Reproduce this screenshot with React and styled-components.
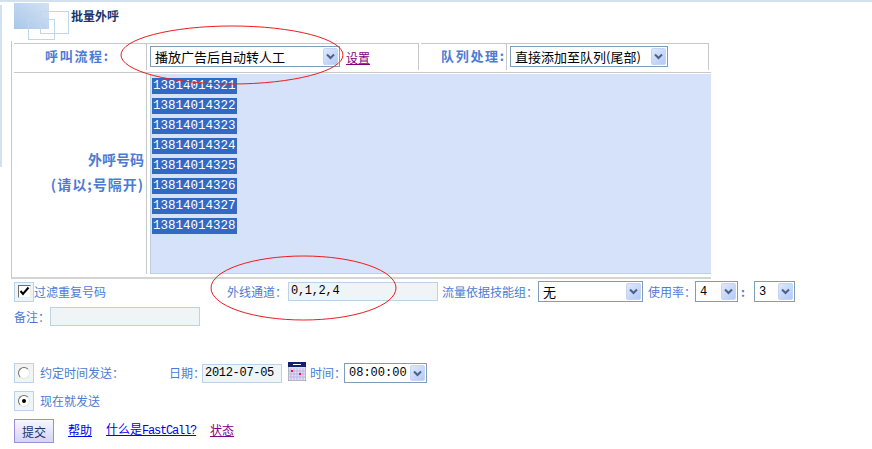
import React from "react";
import styled, { createGlobalStyle } from "styled-components";

const Global = createGlobalStyle`
  html, body { margin: 0; padding: 0; background: #fff; }
  body { font-family: "Noto Sans CJK SC", "Liberation Sans", sans-serif; font-size: 12px; }
`;
const CJK = `"Noto Sans CJK SC", "Liberation Sans", sans-serif`;
const MONO = `"Liberation Mono", "Noto Sans CJK SC", monospace`;
const LABEL = "#4d7bd3";
const RULE = "#c8c8c8";

const Page = styled.div`
  position: relative;
  width: 872px;
  height: 449px;
  box-sizing: border-box;
  border-top: 2px solid #d3e1ee;
  overflow: hidden;
  font-family: ${CJK};
`;
const EdgeLine = styled.div`
  position: absolute;
  left: 0;
  top: 3px;
  width: 2px;
  height: 162px;
  background: #d3e1ee;
`;
const Header = styled.header`
  height: 39px;
  display: flex;
  padding-left: 14px;
  box-sizing: border-box;
`;
const Logo = styled.svg`
  width: 56px;
  height: 38px;
  margin-top: 1px;
  flex: none;
`;
const Title = styled.h1`
  margin: 6px 0 0 1px;
  font-size: 12px;
  line-height: 16px;
  font-weight: 700;
  color: #16336e;
`;
const Table = styled.section`
  margin-left: 11px;
  width: 700px;
  height: 238px;
  box-sizing: border-box;
  border-left: 1px solid ${RULE};
  border-bottom: 2px solid #d4d4d4;
  padding-top: 2px;
`;
const TopRow = styled.div`
  height: 29px;
  padding-left: 2px;
  display: flex;
`;
const Cell = styled.div`
  box-sizing: border-box;
  height: 27px;
  width: ${(p) => p.$w}px;
  flex: none;
  display: flex;
  align-items: flex-start;
  padding: 2px 0 0 ${(p) => p.$pl || 0}px;
  border-top: 1px solid ${RULE};
  border-right: 1px solid ${RULE};
`;
const Gap = styled.div`
  width: 2px;
  flex: none;
`;
const RowLabel = styled.span`
  font-size: 13px;
  line-height: 20px;
  font-weight: 700;
  letter-spacing: 1.7px;
  color: ${LABEL};
  white-space: nowrap;
`;
const BodyRow = styled.div`
  display: flex;
  border-top: 1px solid ${RULE};
  margin-left: 2px;
  width: 697px;
`;
const SideCell = styled.div`
  width: 133px;
  height: 201px;
  box-sizing: border-box;
  border-right: 1px solid ${RULE};
  flex: none;
  display: flex;
  flex-direction: column;
  align-items: flex-end;
  padding: 78px 2px 0 0;
  gap: 9px;
`;
const SideText = styled.span`
  font-size: 14px;
  line-height: 16px;
  font-weight: 700;
  color: ${LABEL};
  letter-spacing: ${(p) => p.$ls || 0}px;
  white-space: nowrap;
`;
const Numbers = styled.div`
  margin: 1px 0 0 3px;
  width: 561px;
  height: 200px;
  box-sizing: border-box;
  background: #d5e2f9;
  border-left: 1px solid #bcd0e4;
  border-bottom: 1px solid #bcd0e4;
  padding: 4px 0 0 1px;
  display: flex;
  flex-direction: column;
  gap: 4px;
`;
const NumberLine = styled.div`
  width: 85px;
  height: 16px;
  line-height: 16px;
  background: #316ac5;
  color: #fff;
  font-family: ${MONO};
  font-size: 12.5px;
  padding-left: 1px;
  box-sizing: border-box;
`;
const SelectBox = styled.div`
  box-sizing: border-box;
  width: ${(p) => p.$w}px;
  height: ${(p) => p.$h || 20}px;
  flex: none;
  border: 1px solid #7f9db9;
  background: #fff;
  display: flex;
  align-items: center;
  padding: 1px 1px 1px 4px;
  margin-left: ${(p) => p.$ml || 0}px;
  color: #000;
`;
const SelectValue = styled.span`
  flex: 1;
  white-space: nowrap;
  font-family: ${(p) => (p.$mono ? MONO : CJK)};
  font-size: ${(p) => (p.$mono ? 12 : 13)}px;
  line-height: 16px;
`;
const ArrowBtn = styled.span`
  width: 15px;
  height: 100%;
  flex: none;
  border-radius: 2px;
  background: linear-gradient(135deg, #dfe9fd, #b2c9f8);
  border: 1px solid #c4d5f6;
  box-sizing: border-box;
  display: flex;
  align-items: center;
  justify-content: center;
`;
const Select = ({ w, h, ml, mono, children }) => (
  <SelectBox $w={w} $h={h} $ml={ml}>
    <SelectValue $mono={mono}>{children}</SelectValue>
    <ArrowBtn>
      <svg width="9" height="7" viewBox="0 0 9 7">
        <path d="M1 1.5 L4.5 5 L8 1.5" fill="none" stroke="#4d6185" strokeWidth="2" />
      </svg>
    </ArrowBtn>
  </SelectBox>
);
const Link = styled.a`
  font-size: 12px;
  line-height: 14px;
  color: ${(p) => (p.$visited ? "#800080" : "#0000ee")};
  text-decoration: underline;
  margin-left: ${(p) => p.$ml || 0}px;
  margin-top: ${(p) => p.$mt || 0}px;
  margin-bottom: ${(p) => p.$mb || 0}px;
  white-space: nowrap;
`;
const Latin = styled.span`
  font-family: ${MONO};
  font-size: 12px;
  letter-spacing: -1.2px;
`;
const FormRow = styled.div`
  display: flex;
  align-items: center;
  height: ${(p) => p.$h}px;
  margin-top: ${(p) => p.$mt || 0}px;
  padding-left: 14px;
`;
const Label = styled.span`
  font-size: 12px;
  line-height: 16px;
  color: ${LABEL};
  white-space: nowrap;
  margin-left: ${(p) => p.$ml || 0}px;
  width: ${(p) => (p.$w ? `${p.$w}px` : "auto")};
  flex: none;
`;
const TextInput = styled.div`
  box-sizing: border-box;
  width: ${(p) => p.$w}px;
  height: 19px;
  flex: none;
  background: #eff4f7;
  border: 1px solid #bcd2e6;
  margin-left: ${(p) => p.$ml || 0}px;
  padding-left: 2px;
  font-family: ${MONO};
  font-size: 12px;
  letter-spacing: -0.3px;
  line-height: 17px;
  color: #000;
`;
const MarkFrame = styled.span`
  box-sizing: border-box;
  width: 20px;
  height: 20px;
  flex: none;
  border: 1px solid #bcd2e6;
  background: #eff4f7;
  display: flex;
  align-items: center;
  justify-content: center;
`;
const CheckFace = styled.span`
  box-sizing: border-box;
  width: 13px;
  height: 13px;
  background: #fff;
  border: 1px solid;
  border-color: #716f64 #f1efe2 #f1efe2 #716f64;
  display: flex;
  align-items: center;
  justify-content: center;
`;
const RadioFace = styled.span`
  box-sizing: border-box;
  width: 12px;
  height: 12px;
  border-radius: 50%;
  background: #fff;
  border: 1px solid;
  border-color: #716f64 #e8e6d8 #e8e6d8 #716f64;
  display: flex;
  align-items: center;
  justify-content: center;
  &::after {
    content: "";
    width: 4px;
    height: 4px;
    border-radius: 50%;
    background: ${(p) => (p.$on ? "#000" : "transparent")};
  }
`;
const SubmitBtn = styled.button`
  box-sizing: border-box;
  width: 40px;
  height: 24px;
  padding: 0;
  border: 1px solid #9a8fd8;
  background: linear-gradient(#f7f7ff, #d3d3f6);
  color: #16336e;
  font-family: ${CJK};
  font-size: 12px;
`;
const CalendarIcon = styled.svg`
  width: 18px;
  height: 19px;
  margin: -4px 0 0 6px;
  flex: none;
`;
const Overlay = styled.svg`
  position: absolute;
  left: 0;
  top: -2px;
  width: 872px;
  height: 449px;
  pointer-events: none;
`;

export default function App() {
  const numbers = [321, 322, 323, 324, 325, 326, 327, 328];
  return (
    <Page>
      <Global />
      <EdgeLine />
      <Header>
        <Logo viewBox="0 0 56 38">
          <defs>
            <linearGradient id="g" x1="0" y1="1" x2="1" y2="0">
              <stop offset="0" stopColor="#a9c7ea" />
              <stop offset="1" stopColor="#d3e2f3" />
            </linearGradient>
          </defs>
          <rect x="0" y="0" width="35" height="26" fill="url(#g)" />
          <rect x="26.5" y="8.5" width="28" height="22" fill="none" stroke="#c0d6ec" />
          <rect x="14.5" y="16.5" width="26" height="20" fill="none" stroke="#c0d6ec" />
        </Logo>
        <Title>批量外呼</Title>
      </Header>
      <Table>
        <TopRow>
          <Cell $w={133} $pl={31}>
            <RowLabel>呼叫流程:</RowLabel>
          </Cell>
          <Cell $w={272} $pl={3}>
            <Select w={190} h={21}>播放广告后自动转人工</Select>
            <Link $visited $ml={6} $mt={5}>设置</Link>
          </Cell>
          <Gap />
          <Cell $w={86} $pl={20}>
            <RowLabel>队列处理:</RowLabel>
          </Cell>
          <Cell $w={202} $pl={3}>
            <Select w={158} h={21}>直接添加至队列(尾部)</Select>
          </Cell>
        </TopRow>
        <BodyRow>
          <SideCell>
            <SideText>外呼号码</SideText>
            <SideText $ls={1}>(请以;号隔开)</SideText>
          </SideCell>
          <Numbers>
            {numbers.map((n) => (
              <NumberLine key={n}>13814014{n}</NumberLine>
            ))}
          </Numbers>
        </BodyRow>
      </Table>
      <FormRow $h={21} $mt={2}>
        <MarkFrame>
          <CheckFace>
            <svg width="11" height="11" viewBox="0 0 11 11">
              <path d="M1.5 5 L4 8 L9.5 1.5" fill="none" stroke="#000" strokeWidth="2" />
            </svg>
          </CheckFace>
        </MarkFrame>
        <Label $w={193}>过滤重复号码</Label>
        <Label $w={61}>外线通道：</Label>
        <TextInput $w={150}>0,1,2,4</TextInput>
        <Label $ml={4} $w={96}>流量依据技能组：</Label>
        <Select w={105} h={21}>无</Select>
        <Label $ml={5} $w={47}>使用率：</Label>
        <Select w={43} h={21} mono>4</Select>
        <Label $ml={3} $w={13}><b>:</b></Label>
        <Select w={41} h={21} mono>3</Select>
      </FormRow>
      <FormRow $h={19} $mt={5}>
        <Label $w={36}>备注：</Label>
        <TextInput $w={150}></TextInput>
      </FormRow>
      <FormRow $h={20} $mt={37}>
        <MarkFrame>
          <RadioFace />
        </MarkFrame>
        <Label $ml={6} $w={129}>约定时间发送：</Label>
        <Label $w={33}>日期：</Label>
        <TextInput $w={80}>2012-07-05</TextInput>
        <CalendarIcon viewBox="0 0 18 19">
          <rect x="0" y="0" width="18" height="19" fill="#e3e0f6" stroke="#555" strokeWidth="0.6" />
          <rect x="0" y="0" width="18" height="5" fill="#14206e" />
          <rect x="5" y="2" width="8" height="1" fill="#ffffff" />
          <path d="M3 6V18M6 6V18M9 6V18M12 6V18M15 6V18M1 9H17M1 12H17M1 15H17" stroke="#b9b5e6" strokeWidth="1" />
          <rect x="3" y="8" width="2" height="2" fill="#e8202a" />
          <rect x="11" y="11" width="2" height="2" fill="#e8202a" />
        </CalendarIcon>
        <Label $ml={4} $w={34}>时间：</Label>
        <Select w={83} mono>08:00:00</Select>
      </FormRow>
      <FormRow $h={20} $mt={8}>
        <MarkFrame>
          <RadioFace $on />
        </MarkFrame>
        <Label $ml={6}>现在就发送</Label>
      </FormRow>
      <FormRow $h={24} $mt={8}>
        <SubmitBtn type="button">提交</SubmitBtn>
        <Link $ml={14} $mb={3}>帮助</Link>
        <Link $ml={14} $mb={3}>什么是<Latin>FastCall?</Latin></Link>
        <Link $visited $ml={14} $mb={3}>状态</Link>
      </FormRow>
      <Overlay viewBox="0 0 872 449">
        <ellipse cx="232" cy="55" rx="111" ry="29" fill="none" stroke="#ee1c1c" strokeWidth="1" />
        <ellipse cx="303.5" cy="288" rx="92.5" ry="32" fill="none" stroke="#ee1c1c" strokeWidth="1" />
      </Overlay>
    </Page>
  );
}
